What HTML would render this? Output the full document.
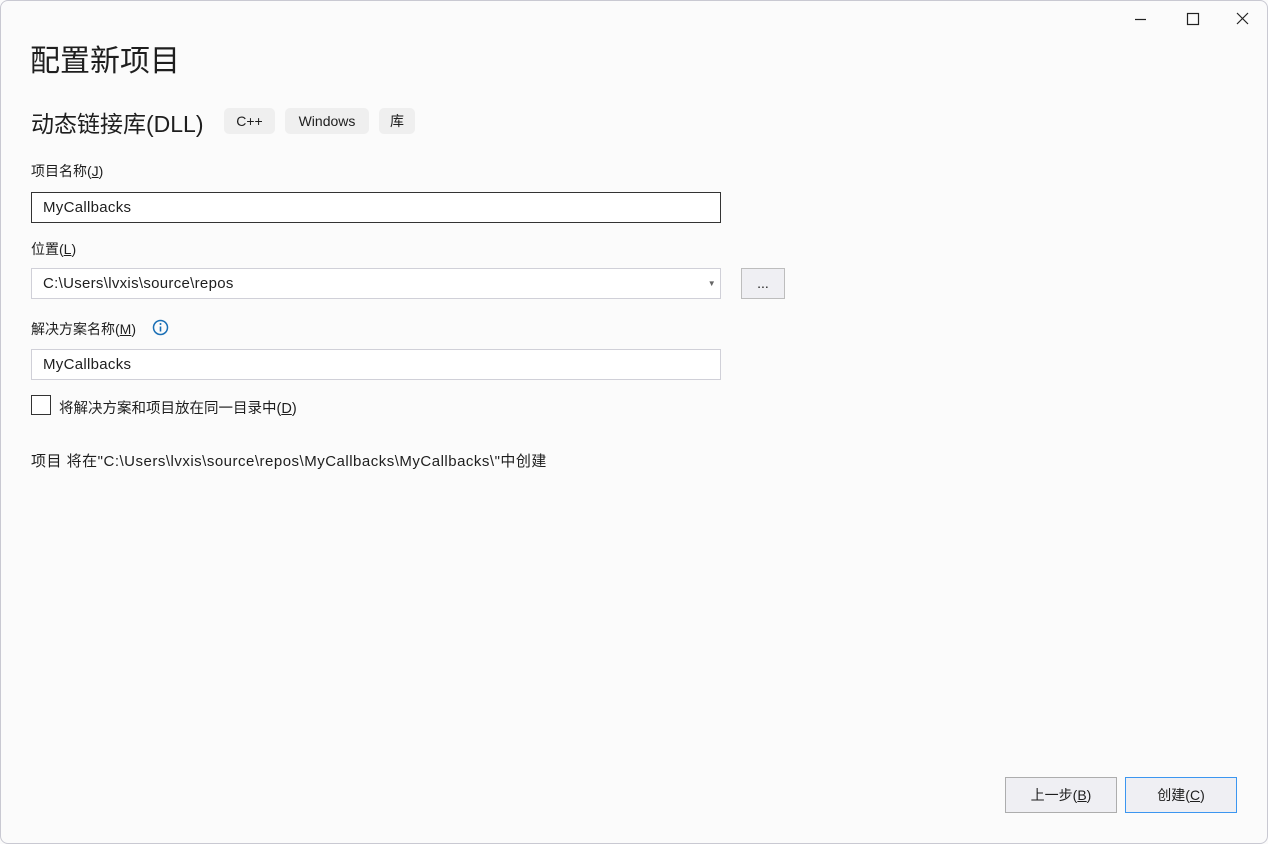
<!DOCTYPE html>
<html><head><meta charset="utf-8"><style>
*{box-sizing:border-box;margin:0;padding:0}
body{width:1268px;height:844px;background:#fbfbfb;font-family:"Liberation Sans","Noto Sans CJK SC",sans-serif;color:#1e1e1e;position:relative;overflow:hidden;font-size:14px}
.frame{position:absolute;inset:0;border:1px solid #c9c9d2;border-radius:8px}
.a{position:absolute;white-space:nowrap}
.tag{position:absolute;top:108px;height:26px;background:#efefef;border-radius:5px;font-size:14px;line-height:26px;text-align:center}
.inp{position:absolute;left:31px;width:690px;height:31px;background:#fff;border:1px solid #d0d0d8;font-size:15px;line-height:29px;padding-left:11px;letter-spacing:0.3px}
.btn{position:absolute;top:777px;width:112px;height:36px;background:#efeff3;border:1px solid #adadad;font-size:14px;line-height:34px;text-align:center}
u{text-decoration:underline}
</style></head><body>
<div class="frame"></div>
<svg class="a" style="left:1134px;top:12px" width="120" height="16" viewBox="0 0 120 16" fill="none" stroke="#222" stroke-width="1.2">
<path d="M1 7.5h11"/><rect x="53.5" y="1.5" width="11" height="11"/><path d="M103 1l11 11M114 1l-11 11"/></svg>
<div class="a" style="left:30px;top:36px;font-size:30px">配置新项目</div>
<div class="a" style="left:31px;top:105px;font-size:23px">动态链接库(DLL)</div>
<div class="tag" style="left:224px;width:51px">C++</div>
<div class="tag" style="left:285px;width:84px">Windows</div>
<div class="tag" style="left:379px;width:36px">库</div>
<div class="a" style="left:31px;top:161px">项目名称(<u>J</u>)</div>
<div class="inp" style="top:192px;border-color:#333">MyCallbacks</div>
<div class="a" style="left:31px;top:239px">位置(<u>L</u>)</div>
<div class="inp" style="top:268px">C:\Users\lvxis\source\repos<span style="position:absolute;right:4px;top:0;font-size:8px;color:#666">▼</span></div>
<div class="a" style="left:741px;top:268px;width:44px;height:31px;background:#efeff3;border:1px solid #bdbdbd;text-align:center;line-height:28px">...</div>
<div class="a" style="left:31px;top:319px">解决方案名称(<u>M</u>)</div>
<svg class="a" style="left:152px;top:319px" width="17" height="17" viewBox="0 0 17 17"><circle cx="8.5" cy="8.5" r="7" fill="none" stroke="#1a6fb5" stroke-width="1.5"/><path d="M8.5 7.5v5" stroke="#1a6fb5" stroke-width="1.6"/><circle cx="8.5" cy="5" r="1" fill="#1a6fb5"/></svg>
<div class="inp" style="top:349px">MyCallbacks</div>
<div class="a" style="left:31px;top:395px;width:20px;height:20px;border:1px solid #333;background:#fff"></div>
<div class="a" style="left:59px;top:397px;font-size:14.5px">将解决方案和项目放在同一目录中(<u>D</u>)</div>
<div class="a" style="left:31px;top:450px;font-size:15px;letter-spacing:0.5px">项目 将在"C:\Users\lvxis\source\repos\MyCallbacks\MyCallbacks\"中创建</div>
<div class="btn" style="left:1005px">上一步(<u>B</u>)</div>
<div class="btn" style="left:1125px;border-color:#3c96f0">创建(<u>C</u>)</div>
</body></html>
